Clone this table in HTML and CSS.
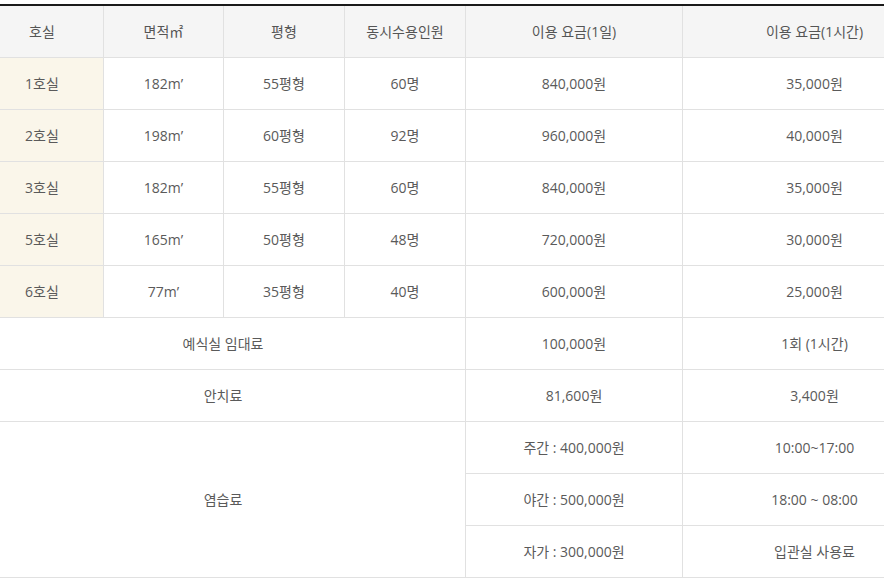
FILE: index.html
```html
<!DOCTYPE html>
<html lang="ko">
<head>
<meta charset="utf-8">
<link rel="stylesheet" href="styles.css">
</head>
<body>
<div class="wrap">
<table class="price">
  <colgroup>
    <col class="c1"><col class="c2"><col class="c3"><col class="c4"><col class="c5"><col class="c6">
  </colgroup>
  <thead>
    <tr><th>호실</th><th>면적㎡</th><th>평형</th><th>동시수용인원</th><th>이용 요금(1일)</th><th>이용 요금(1시간)</th></tr>
  </thead>
  <tbody>
    <tr><td class="room">1호실</td><td>182m’</td><td>55평형</td><td>60명</td><td>840,000원</td><td>35,000원</td></tr>
    <tr><td class="room">2호실</td><td>198m’</td><td>60평형</td><td>92명</td><td>960,000원</td><td>40,000원</td></tr>
    <tr><td class="room">3호실</td><td>182m’</td><td>55평형</td><td>60명</td><td>840,000원</td><td>35,000원</td></tr>
    <tr><td class="room">5호실</td><td>165m’</td><td>50평형</td><td>48명</td><td>720,000원</td><td>30,000원</td></tr>
    <tr><td class="room">6호실</td><td>77m’</td><td>35평형</td><td>40명</td><td>600,000원</td><td>25,000원</td></tr>
    <tr><td colspan="4">예식실 임대료</td><td>100,000원</td><td>1회 (1시간)</td></tr>
    <tr><td colspan="4">안치료</td><td>81,600원</td><td>3,400원</td></tr>
    <tr><td colspan="4" rowspan="3">염습료</td><td>주간 : 400,000원</td><td>10:00~17:00</td></tr>
    <tr><td>야간 : 500,000원</td><td>18:00 ~ 08:00</td></tr>
    <tr><td>자가 : 300,000원</td><td>입관실 사용료</td></tr>
  </tbody>
</table>
</div>
</body>
</html>
```

FILE: styles.css
```css
html, body {
  margin: 0;
  padding: 0;
  background: #fff;
}
.wrap {
  width: 884px;
  height: 584px;
  overflow: hidden;
  padding-top: 4px;
  box-sizing: border-box;
}
.price {
  margin-left: -20px;
  width: 966px;
  table-layout: fixed;
  border-collapse: collapse;
  border-top: 2px solid #1a1a1a;
  font-family: "Open Sans", "Noto Sans CJK KR", sans-serif;
  font-size: 14px;
  color: #5a5a5a;
}
.c1 { width: 123px; }
.c2 { width: 120px; }
.c3 { width: 121px; }
.c4 { width: 121px; }
.c5 { width: 217px; }
.c6 { width: 264px; }
.price th,
.price td {
  height: 51px;
  padding: 0;
  text-align: center;
  vertical-align: middle;
  border: 1px solid #e1e1e1;
  font-weight: normal;
  line-height: 20px;
}
.price thead th {
  height: 51px;
  background: #f5f5f5;
  color: #555;
  border-top: none;
}
.price td.room {
  background: #faf6ea;
}
```
